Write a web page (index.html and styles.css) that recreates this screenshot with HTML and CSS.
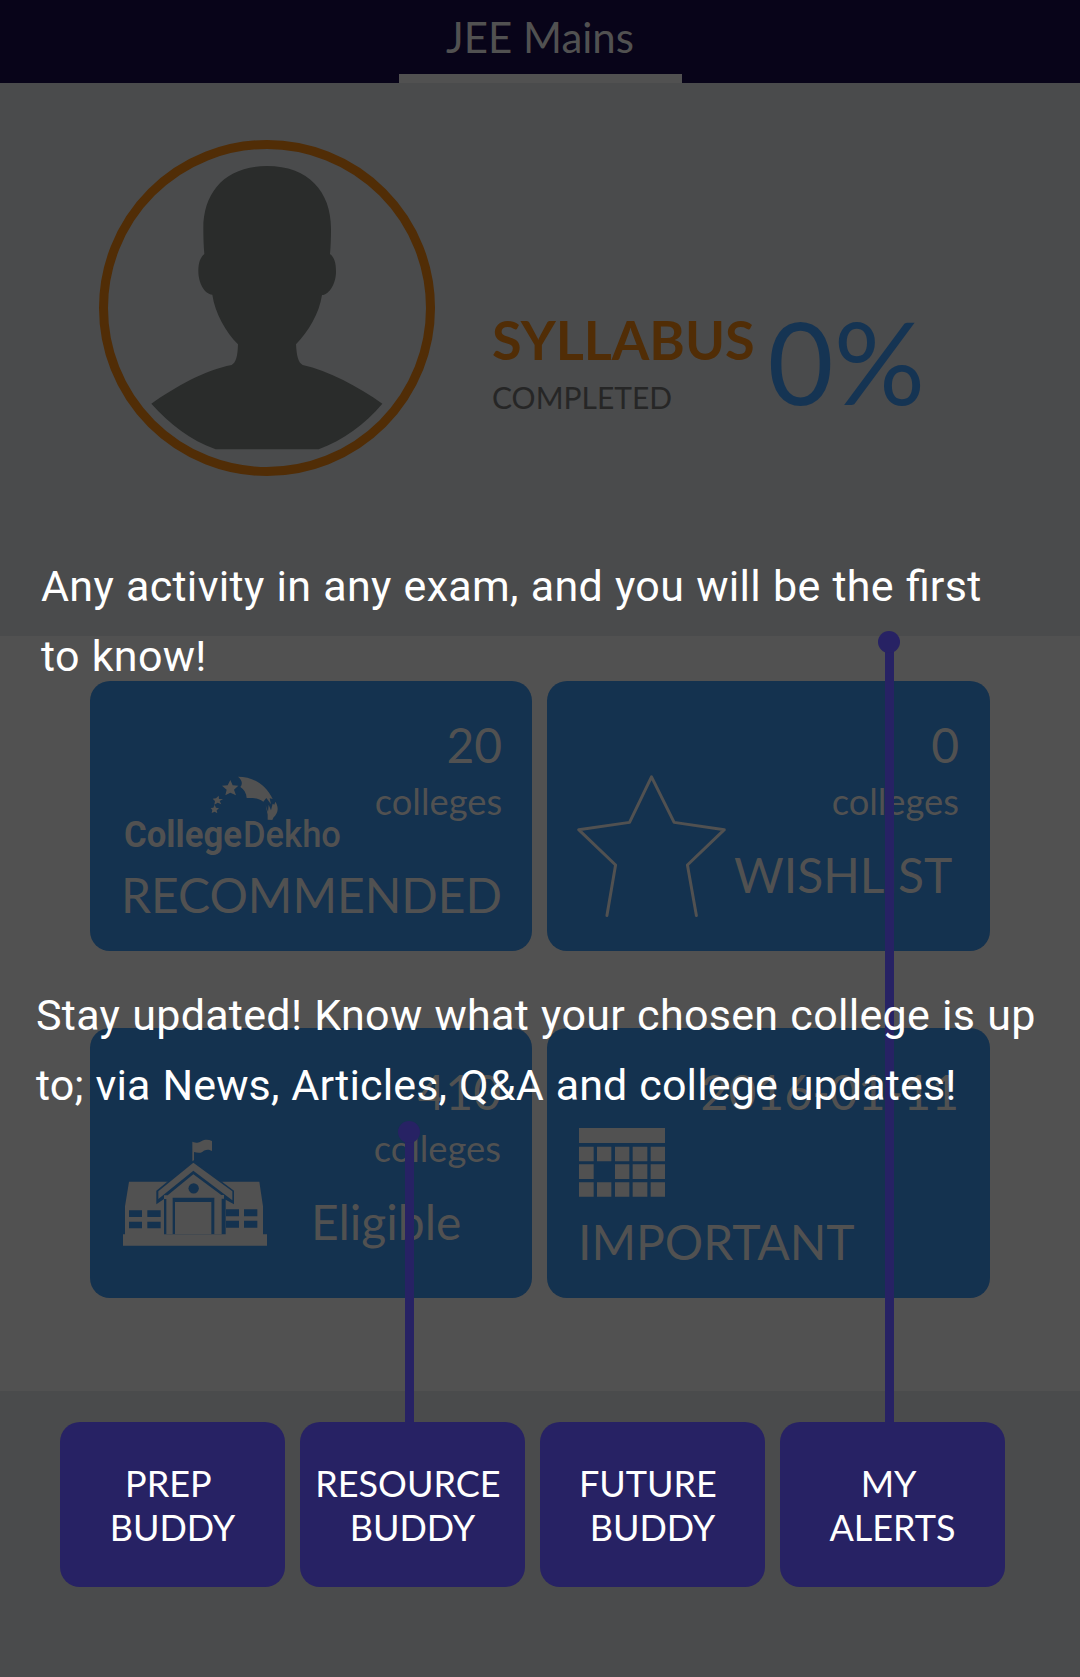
FILE: index.html
```html
<!DOCTYPE html>
<html lang="en">
<head>
<meta charset="utf-8">
<title>JEE Mains</title>
<link rel="stylesheet" href="styles.css">
</head>
<body>
<div class="screen">
  <header class="tabs"><div class="tab">JEE Mains</div></header>

  <section class="hero">
    <svg class="avatar" viewBox="57 60 1008 1008">
      <circle cx="561" cy="564" r="490.500" fill="none" stroke="#512d06" stroke-width="27"/>
      <path fill="#2a2c2b" d="M561 138C685 138 753 215 753 325Q753 370 750 402C763 412 768 428 768 455C768 490 748 524 726 525C718 580 685 635 648 673C650 710 655 728 668 735C745 752 835 800 907 851C855 913 790 960 716 988H407C330 960 270 913 214 851C287 800 375 750 455 735C468 728 473 710 474 673C437 635 405 580 397 524C374 522 355 490 355 452C355 428 361 412 373 402Q370 370 370 325C370 215 437 138 561 138Z"/>
    </svg>
    <div class="progress">
      <div class="progress-name">SYLLABUS</div>
      <div class="progress-state">COMPLETED</div>
    </div>
    <div class="percent">0%</div>
  </section>

  <main class="cards">
    <article class="card">
      <div class="figures"><div class="count">20</div><div class="unit">colleges</div></div>
      <div class="topic topic-stack">
        <svg class="logo" viewBox="132 315 654 243" fill="#515151">
          <path d="M451 330l7 16 17 1-13 12 6 17-17-8-15 8 4-17-14-12 17-1zM416 377l1 10 12 0-10 6 5 10-11-5-10 6 2-11-7-7 10-1zM404 404l4 9 9 2-7 6 2 9-8-5-9 4 2-9-5-6 8-1z"/>
          <path d="M474 320C520 320 558 345 578 387L569 385L573 403L559 384L550 395C535 383 518 384 500 384C499 369 492 358 481 351C489 341 486 330 474 320Z"/>
          <path d="M557 405l7 21 2-22 7 17 5-20 5 3 3-9c11 17 9 33-5 47l-4 8-14-1v-15z"/>
          <text class="logo-bold" x="132" y="530" textLength="354" lengthAdjust="spacingAndGlyphs">College</text>
          <text class="logo-thin" x="489" y="530" textLength="294" lengthAdjust="spacingAndGlyphs">Dekho</text>
        </svg>
        <div class="label">RECOMMENDED</div>
      </div>
    </article>

    <article class="card">
      <div class="figures"><div class="count">0</div><div class="unit">colleges</div></div>
      <div class="topic topic-wish">
        <svg class="star" viewBox="112 315 448 426" fill="none" stroke="#515151" stroke-width="9" stroke-linejoin="round" stroke-linecap="round">
          <path d="M202 737L228 585L117 479L270 457L336 320L404 457L555 479L444 585L471 737"/>
        </svg>
        <div class="label">WISHLIST</div>
      </div>
    </article>

    <article class="card">
      <div class="figures"><div class="count">410</div><div class="unit">colleges</div></div>
      <div class="topic topic-eligible">
        <svg class="school" viewBox="129 418 432 321">
          <path fill="#515151" d="M337 492V426C350 430 356 430 364 425C376 418 386 420 396 424V454C384 448 376 450 368 456C360 461 352 460 342 457V490Z"/>
          <path fill="#515151" d="M147 546H538L549 620V704H561V738H129V704H135V620Z"/>
          <path fill="#14324f" d="M340 482L229 573V614L252 598V704H437V600L462 614V573Z"/>
          <path fill="#515151" d="M340 489L457 575V602L340 513L235 598V575Z"/>
          <path fill="#515151" d="M340 524L424 586H432V597H425V704H403V594H278V704H259V598H252V587H263ZM285 607H394V704H285Z"/>
          <circle cx="341" cy="566" r="15.500" fill="#14324f"/>
          <path fill="#14324f" d="M147 632h39v20h-39zM202 632h40v20h-40zM147 666h39v20h-39zM202 666h40v20h-40zM438 629h39v21h-39zM492 629h40v21h-40zM438 663h39v21h-39zM492 663h40v21h-40z"/>
        </svg>
        <div class="label">Eligible</div>
      </div>
    </article>

    <article class="card">
      <div class="figures"><div class="count">2016-01-11</div></div>
      <div class="topic topic-stack">
        <svg class="calendar" viewBox="117 386 258 207" fill="#515151">
          <path d="M117 386h258v45H117zM117 442h44v44h-44zM171 442h43v44h-43zM225 442h43v44h-43zM278 442h44v44h-44zM332 442h43v44h-43zM117 495h44v44h-44zM225 495h43v44h-43zM278 495h44v44h-44zM332 495h43v44h-43zM117 549h44v43h-44zM171 549h43v43h-43zM225 549h43v43h-43zM278 549h44v43h-44zM332 549h43v43h-43z"/>
        </svg>
        <div class="label">IMPORTANT</div>
      </div>
    </article>
  </main>

  <nav class="buddies">
    <button class="buddy">PREP <br>BUDDY</button>
    <button class="buddy">RESOURCE <br>BUDDY</button>
    <button class="buddy">FUTURE <br>BUDDY</button>
    <button class="buddy">MY <br>ALERTS</button>
  </nav>

  <div class="pointer pointer-alerts"></div>
  <div class="pointer pointer-resource"></div>
  <p class="hint hint-alerts">Any activity in any exam, and you will be the <span class="ligature">fi</span>rst<br>to know!</p>
  <p class="hint hint-resource">Stay updated! Know what your chosen college is up<br><span class="tight">to; via News, Articles, Q&amp;A and college updates!</span></p>
</div>
</body>
</html>
```
FILE: styles.css
```css
* { box-sizing: border-box; }

body {
  margin: 0;
  background: #515151;
  font-family: Lato, "Liberation Sans", sans-serif;
  color: #515151;
}

svg { display: block; flex: none; overflow: visible; }

.screen {
  position: relative;
  display: flex;
  flex-direction: column;
  width: 1080px;
  height: 1677px;
  overflow: hidden;
}

.tabs {
  display: flex;
  justify-content: center;
  height: 83px;
  background: #080419;
}

.tab {
  width: 283px;
  padding-top: 11px;
  border-bottom: 9px solid #515151;
  font-size: 42px;
  line-height: 52px;
  text-align: center;
}

.hero {
  display: flex;
  height: 553px;
  padding: 57px 0 0 99px;
  background: #4a4b4c;
}

.avatar { width: 336px; height: 336px; }

.progress { padding: 168px 0 0 57px; }

.progress-name {
  color: #512d06;
  font-size: 54px;
  font-weight: 700;
  line-height: 64px;
}

.progress-state {
  margin-top: 7px;
  color: #262626;
  font-size: 30px;
  line-height: 36px;
}

.percent {
  padding: 152px 0 0 13px;
  color: #153453;
  font-size: 114px;
  line-height: 137px;
}

.cards {
  display: grid;
  grid-template-columns: 442px 443px;
  grid-auto-rows: 270px;
  gap: 77px 15px;
  height: 755px;
  padding: 45px 90px 0;
}

.card {
  display: grid;
  padding: 35px 31px 27px;
  border-radius: 20px;
  background: #14324f;
}

.figures,
.topic { grid-area: 1 / 1; }

.figures { text-align: right; }

.count { font-size: 48px; line-height: 58px; }

.unit { margin-top: 5px; font-size: 36.3px; line-height: 44px; }

.label { font-size: 48px; line-height: 58px; }

.topic { align-self: end; display: flex; }

.topic-stack { flex-direction: column; }

.topic-wish,
.topic-eligible { align-items: flex-end; }

.logo { width: 218px; height: 81px; margin: 0 0 10px 3px; }

.logo-bold { font: 700 112px Roboto, sans-serif; }

.logo-thin { font: 500 112px Roboto, sans-serif; }

.star { width: 149px; height: 142px; margin: 0 8px 7px -1px; }

.topic-wish .label { margin-bottom: 20px; }

.school { width: 144px; height: 107px; margin: 0 44px 25px 2px; }

.topic-eligible .label { margin-bottom: 20px; }

.calendar { width: 86px; height: 69px; margin: 0 0 16px 1px; }

.buddies {
  display: flex;
  gap: 15px;
  height: 286px;
  padding: 31px 60px 0;
  background: #4a4b4c;
}

.buddy {
  width: 225px;
  height: 165px;
  padding: 0;
  border: 0;
  border-radius: 20px;
  background: #272264;
  color: #fff;
  font: 36px/44px Lato, "Liberation Sans", sans-serif;
  text-align: center;
  white-space: pre;
}

/* Coach-mark layer above the screen */
.pointer {
  position: absolute;
  width: 9px;
  background: #272264;
}

.pointer::before {
  content: "";
  position: absolute;
  top: -11px;
  left: -7px;
  width: 22px;
  height: 22px;
  border-radius: 50%;
  background: #272264;
}

.pointer-alerts { left: 885px; top: 642px; height: 780px; }

.pointer-resource { left: 405px; top: 1132px; height: 290px; }

.hint {
  position: absolute;
  margin: 0;
  color: #fff;
  font-family: Roboto, sans-serif;
  font-size: 43px;
  line-height: 70px;
  letter-spacing: 0.3px;
  word-spacing: 1px;
  white-space: nowrap;
}

.ligature { letter-spacing: 0; }

.tight { letter-spacing: 0.14px; }

.hint-alerts { left: 41px; top: 551px; }

.hint-resource { left: 36px; top: 980px; }
```
